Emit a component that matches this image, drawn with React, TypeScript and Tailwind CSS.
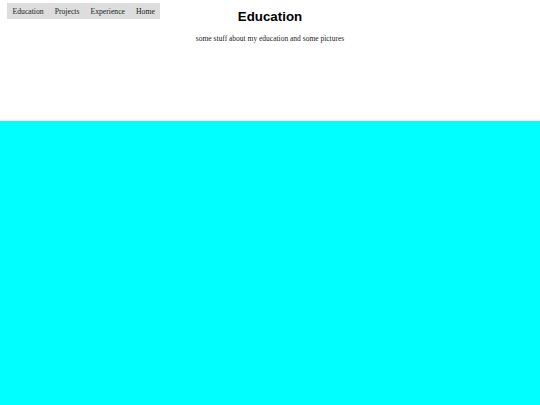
export default function App() {
  return (
    <div className="min-h-[405px] flex flex-col bg-white">
      <div className="relative h-[121px] flex flex-col items-center">
        <nav className="absolute left-[7px] top-[3px] h-[16px] pt-[2px] bg-[#dddddd] flex items-center text-[7.7px] text-[#222]" style={{ fontFamily: '"Liberation Serif", "Times New Roman", serif' }}>
          <span className="px-[5.5px]">Education</span>
          <span className="px-[5.5px]">Projects</span>
          <span className="px-[5.5px]">Experience</span>
          <span className="px-[5.5px]">Home</span>
        </nav>
        <h1 className="mt-[8px] text-[13.3px] font-bold text-black leading-[17px]" style={{ fontFamily: '"Liberation Sans", Arial, sans-serif' }}>Education</h1>
        <p className="mt-[8px] text-[7.5px] text-[#222]" style={{ fontFamily: '"Liberation Serif", "Times New Roman", serif' }}>some stuff about my education and some pictures</p>
      </div>
      <div className="flex-1 bg-[#00ffff]" />
    </div>
  );
}
